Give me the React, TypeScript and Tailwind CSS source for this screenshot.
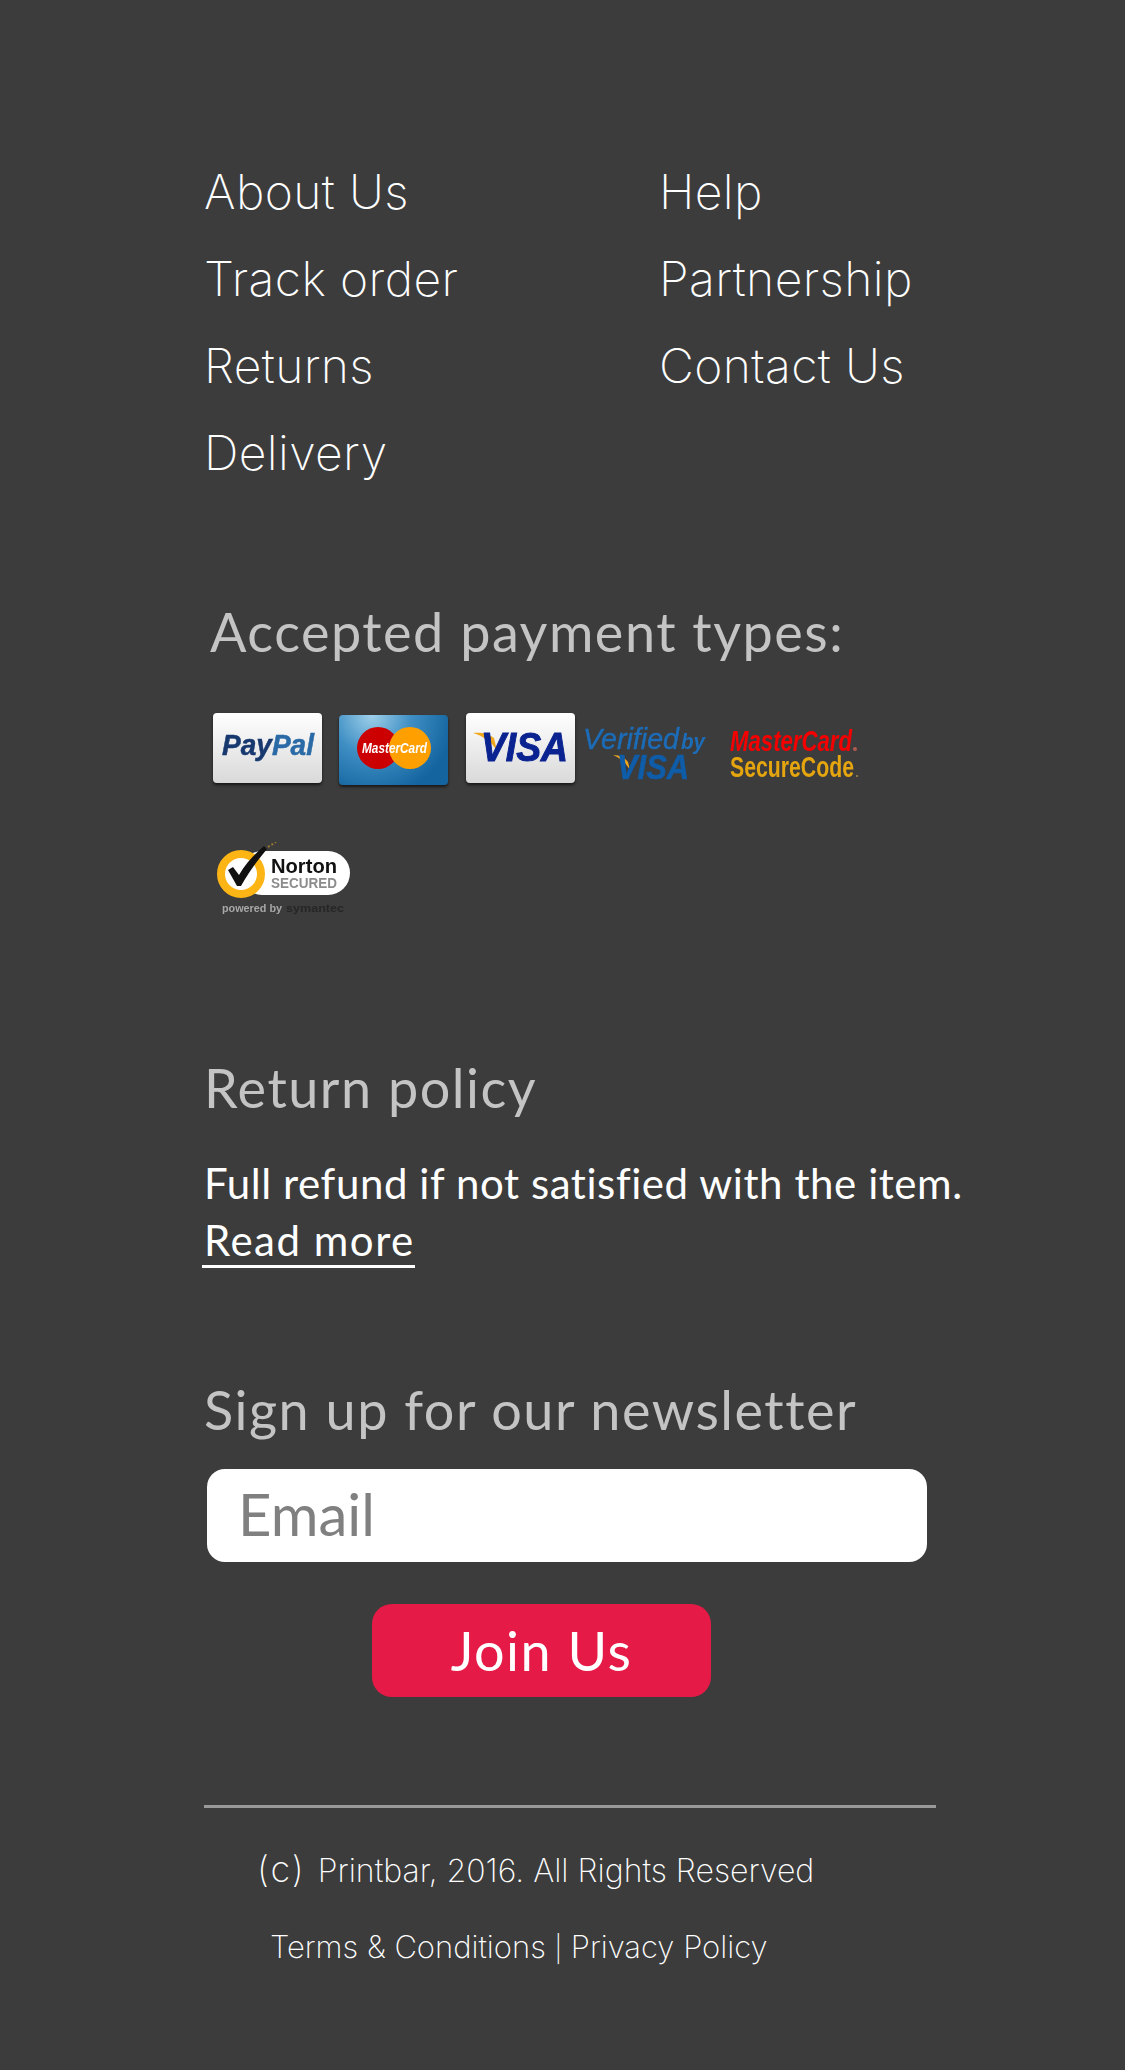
const linkFont = "font-['Inter',sans-serif] font-[250] text-white";
const headFont = "font-['Lato',sans-serif] text-[#c4c4c4]";

const cols = [
  ['About Us', 'Track order', 'Returns', 'Delivery'],
  ['Help', 'Partnership', 'Contact Us'],
];

function Card({ className, children }: { className: string; children: React.ReactNode }) {
  return (
    <div className={`relative w-[109px] h-[70px] rounded-[4px] shadow-[0_2px_3px_rgba(0,0,0,0.6)] overflow-hidden ${className}`}>
      {children}
    </div>
  );
}

const logoText = { fontFamily: 'Liberation Sans, sans-serif', fontWeight: 700, fontStyle: 'italic' } as const;
const plainBold = { fontFamily: 'Liberation Sans, sans-serif', fontWeight: 700 } as const;

function PayPal() {
  return (
    <Card className="bg-gradient-to-b from-white to-[#d9d9d9]">
      <svg viewBox="0 0 109 70" className="w-full h-full blur-[0.5px]">
        <text x="9" y="42" fontSize="29" textLength="92" lengthAdjust="spacingAndGlyphs" strokeWidth="0.5" style={logoText}>
          <tspan fill="#17396f" stroke="#17396f">Pay</tspan>
          <tspan fill="#2a6aa6" stroke="#2a6aa6">Pal</tspan>
        </text>
      </svg>
    </Card>
  );
}

function MasterCard() {
  return (
    <Card className="mt-[2px] bg-[radial-gradient(circle_at_30%_0%,#9fd0ea_0%,#3f8fc4_38%,#13649f_80%)]">
      <svg viewBox="0 0 109 70" className="w-full h-full blur-[0.5px]">
        <circle cx="39" cy="33" r="21" fill="#cc0000" />
        <circle cx="71" cy="33" r="21" fill="#ff9f00" />
        <text x="23" y="38" fontSize="15" textLength="65" lengthAdjust="spacingAndGlyphs" fill="#fff" style={logoText}>
          MasterCard
        </text>
      </svg>
    </Card>
  );
}

function Visa() {
  return (
    <Card className="bg-gradient-to-b from-white to-[#d9d9d9]">
      <svg viewBox="0 0 109 70" className="w-full h-full blur-[0.4px]">
        <path d="M7 20 C14 19 22 20 28 25 L31 38 C26 29 17 23 7 20Z" fill="#f2a81d" />
        <text x="15" y="48" fontSize="40" textLength="87" lengthAdjust="spacingAndGlyphs" fill="#0a2390" stroke="#0a2390" strokeWidth="1" style={logoText}>
          VISA
        </text>
      </svg>
    </Card>
  );
}

function VerifiedVisa() {
  return (
    <svg viewBox="0 0 122 60" className="w-[122px] h-[60px] mt-[13px] ml-[8px] blur-[0.5px] overflow-visible">
      <text x="0" y="23" fontSize="30" textLength="96" lengthAdjust="spacingAndGlyphs" fill="#1c6cb8" stroke="#1c6cb8" strokeWidth="0.4" style={{ ...logoText, fontWeight: 400 }}>
        Verified
      </text>
      <text x="98" y="23" fontSize="22" textLength="24" lengthAdjust="spacingAndGlyphs" fill="#1c6cb8" style={logoText}>
        by
      </text>
      <path d="M30 29 C37 29 42 32 45 36 L47 44 C43 37 37 32 30 29Z" fill="#f2a81d" />
      <text x="34" y="53" fontSize="35" textLength="72" lengthAdjust="spacingAndGlyphs" fill="#0f5ca8" stroke="#0f5ca8" strokeWidth="0.6" style={logoText}>
        VISA
      </text>
    </svg>
  );
}

function SecureCode() {
  return (
    <svg viewBox="0 0 130 60" className="w-[130px] h-[60px] mt-[15px] ml-[25px] blur-[0.4px] overflow-visible">
      <text x="0" y="23" fontSize="30" textLength="122" lengthAdjust="spacingAndGlyphs" fill="#f40000" style={logoText}>
        MasterCard
      </text>
      <circle cx="125" cy="21" r="2" fill="#b05a50" />
      <text x="0" y="49" fontSize="29" textLength="124" lengthAdjust="spacingAndGlyphs" fill="#e5a50f" style={plainBold}>
        SecureCode
      </text>
      <circle cx="127" cy="48" r="1" fill="#a08a50" />
    </svg>
  );
}

function Norton() {
  return (
    <svg viewBox="0 0 140 78" className="w-[140px] h-[78px] mt-[54px] ml-[12px] blur-[0.6px]">
      <rect x="24" y="9" width="110" height="44" rx="22" fill="#fff" />
      <circle cx="25" cy="32" r="20" fill="#fff" stroke="#fdb515" strokeWidth="8" />
      <path d="M12 28 L17 25 L23 33 C30 21 38 13 48 4 L51 7 C41 19 33 30 25 44 L21 44Z" fill="#111" />
      <path d="M52 5 L60 0" stroke="#9a7a30" strokeWidth="2" strokeDasharray="2 2" />
      <text x="55" y="31" fontSize="21" textLength="66" lengthAdjust="spacingAndGlyphs" fill="#111" style={plainBold}>
        Norton
      </text>
      <text x="55" y="46" fontSize="14" textLength="66" lengthAdjust="spacingAndGlyphs" fill="#8c8c8c" style={plainBold}>
        SECURED
      </text>
      <text x="6" y="70" fontSize="10" textLength="60" lengthAdjust="spacingAndGlyphs" fill="#a8a8a8" style={plainBold}>
        powered by
      </text>
      <text x="70" y="70" fontSize="10" textLength="58" lengthAdjust="spacingAndGlyphs" fill="#262626" style={plainBold}>
        symantec
      </text>
    </svg>
  );
}

export default function App() {
  return (
    <div className="w-[1125px] h-[2070px] overflow-hidden bg-[#3c3c3c] pl-[204px] pt-[148px]">
      {/* Links */}
      <div className="grid grid-cols-[455px_1fr]">
        {cols.map((col, i) => (
          <div key={i}>
            {col.map((label) => (
              <div key={label} className={`h-[87px] leading-[87px] text-[48px] tracking-[0.4px] ${linkFont}`}>
                {label}
              </div>
            ))}
          </div>
        ))}
      </div>

      {/* Payment types */}
      <h2 className={`mt-[101px] ml-[6px] h-[70px] leading-[70px] text-[54px] tracking-[1.5px] whitespace-nowrap ${headFont}`}>
        Accepted payment types:
      </h2>
      <div className="mt-[46px] ml-[9px] flex items-start">
        <PayPal />
        <div className="ml-[17px]"><MasterCard /></div>
        <div className="ml-[18px]"><Visa /></div>
        <VerifiedVisa />
        <SecureCode />
      </div>
      <Norton />

      {/* Return policy */}
      <h2 className={`mt-[133px] h-[70px] leading-[70px] text-[54px] tracking-[1.5px] ${headFont}`}>Return policy</h2>
      <p className="mt-[32px] w-[800px] text-[42px] leading-[57px] font-['Lato',sans-serif] text-white tracking-[0.58px]">
        Full refund if not satisfied with the item.
        <br />
        <a className="inline-block -ml-[2px] pl-[2px] leading-[50px] tracking-[1.5px] border-b-[3px] border-white">Read more</a>
      </p>

      {/* Newsletter */}
      <h2 className={`mt-[106px] h-[70px] leading-[70px] text-[54px] tracking-[1.5px] ${headFont}`}>
        Sign up for our newsletter
      </h2>
      <input
        placeholder="Email"
        className="mt-[24px] ml-[3px] block w-[720px] h-[93px] rounded-[18px] bg-white pl-[31px] pb-[4px] text-[58px] font-['Lato',sans-serif] outline-none placeholder:text-[#808080]"
      />
      <button className="mt-[42px] ml-[168px] block w-[339px] h-[93px] rounded-[20px] bg-[#e51a46] text-[54px] font-['Lato',sans-serif] text-white tracking-[1.5px]">
        Join Us
      </button>

      {/* Footer */}
      <div className="mt-[108px] w-[732px] h-[3px] bg-[#999999]" />
      <div className={`mt-[41px] ml-[53px] h-[40px] leading-[40px] text-[32px] whitespace-nowrap ${linkFont}`}>
        <span className="text-[36px] tracking-[2px] mr-[3px]">(c)</span> Printbar, 2016. All Rights Reserved
      </div>
      <div className={`mt-[38px] ml-[66px] h-[40px] leading-[40px] text-[31px] whitespace-nowrap ${linkFont}`}>
        Terms &amp; Conditions <span className="text-[26px]">|</span> Privacy Policy
      </div>
    </div>
  );
}
